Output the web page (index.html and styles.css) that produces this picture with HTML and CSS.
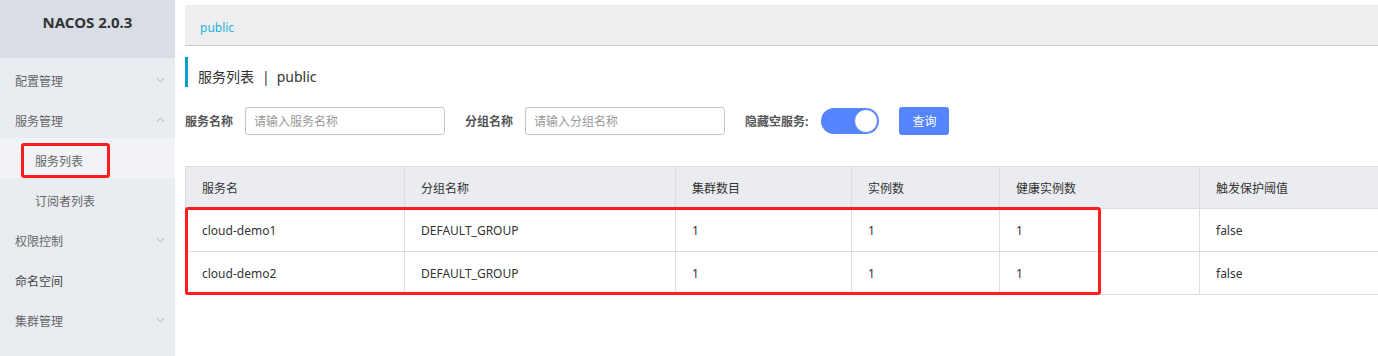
FILE: index.html
```html
<!DOCTYPE html>
<html lang="zh-CN">
<head>
<meta charset="utf-8">
<title>Nacos</title>
<link rel="stylesheet" href="styles.css">
</head>
<body>
<div class="app">
  <aside class="sidebar">
    <div class="brand">NACOS 2.0.3</div>
    <ul class="menu">
      <li class="menu-item">配置管理<svg class="chev" viewBox="0 0 10 6"><path d="M1 1l4 4 4-4"/></svg></li>
      <li class="menu-item">服务管理<svg class="chev" viewBox="0 0 10 6"><path d="M1 5l4-4 4 4"/></svg></li>
      <li class="sub-item active"><span class="sub-label">服务列表</span><span class="mark mark-side"></span></li>
      <li class="sub-item">订阅者列表</li>
      <li class="menu-item">权限控制<svg class="chev" viewBox="0 0 10 6"><path d="M1 1l4 4 4-4"/></svg></li>
      <li class="menu-item strong">命名空间</li>
      <li class="menu-item">集群管理<svg class="chev" viewBox="0 0 10 6"><path d="M1 1l4 4 4-4"/></svg></li>
    </ul>
  </aside>
  <main class="main">
    <div class="crumb"><span class="crumb-link">public</span></div>
    <h1 class="title">服务列表<span class="sep">|</span>public</h1>
    <div class="filters">
      <label class="flabel">服务名称</label>
      <input class="finput" type="text" placeholder="请输入服务名称">
      <label class="flabel">分组名称</label>
      <input class="finput" type="text" placeholder="请输入分组名称">
      <label class="flabel flabel-switch">隐藏空服务:</label>
      <span class="toggle"><span class="knob"></span></span>
      <button class="btn">查询</button>
    </div>
    <div class="table-wrap">
      <table class="table">
        <colgroup>
          <col style="width:219px"><col style="width:271px"><col style="width:176px"><col style="width:148px"><col style="width:200px"><col style="width:179px">
        </colgroup>
        <thead>
          <tr><th>服务名</th><th>分组名称</th><th>集群数目</th><th>实例数</th><th>健康实例数</th><th>触发保护阈值</th></tr>
        </thead>
        <tbody>
          <tr><td>cloud-demo1</td><td>DEFAULT_GROUP</td><td>1</td><td>1</td><td>1</td><td>false</td></tr>
          <tr><td>cloud-demo2</td><td>DEFAULT_GROUP</td><td>1</td><td>1</td><td>1</td><td>false</td></tr>
        </tbody>
      </table>
      <span class="mark mark-table"></span>
    </div>
  </main>
</div>
</body>
</html>
```
FILE: styles.css
```css
* { box-sizing: border-box; }
html, body { margin: 0; padding: 0; }
body {
  font-family: "Noto Sans", "Noto Sans CJK SC", sans-serif;
  font-size: 12px;
  color: #333;
  background: #fff;
}
.app { display: flex; height: 356px; overflow: hidden; }
.sidebar {
  width: 175px;
  flex: none;
  background: #e9ecf1;
}
.brand {
  height: 58px;
  background: #d9dee6;
  display: flex;
  align-items: center;
  justify-content: center;
  font-weight: bold;
  font-size: 15px;
  color: #333;
  padding-bottom: 14px;
}
.menu { list-style: none; margin: 0; padding: 0; }
.menu-item, .sub-item {
  position: relative;
  height: 40px;
  line-height: 48px;
  color: #666;
  padding-left: 15px;
}
.menu-item.strong { color: #444; }
.sub-item { padding-left: 35px; }
.sub-item.active { background: #f1f3f6; }
.chev {
  position: absolute;
  right: 10px;
  top: 19px;
  width: 9px;
  height: 6px;
  fill: none;
  stroke: #a3a6ad;
  stroke-width: 1;
}
.mark {
  position: absolute;
  border: 3px solid #ff1d1d;
  border-radius: 3px;
  pointer-events: none;
}
.mark-side { left: 21px; top: 5px; width: 89px; height: 35px; }

.main { flex: 1; padding: 5px 0 0 10px; min-width: 0; }
.crumb {
  height: 41px;
  background: #eeeeee;
  border-bottom: 1px solid #cccccc;
  padding-left: 15px;
  line-height: 46px;
}
.crumb-link { color: #1fb3de; }
.title {
  margin: 11px 0 0;
  height: 30px;
  border-left: 3px solid #129bd0;
  padding-left: 10px;
  font-size: 14px;
  font-weight: normal;
  line-height: 39px;
  color: #333;
}
.sep { margin: 0 7px 0 8px; }
.filters {
  display: flex;
  align-items: center;
  margin-top: 20px;
  height: 28px;
}
.flabel { font-weight: bold; color: #555; margin-right: 12px; }
.finput {
  width: 200px;
  height: 28px;
  border: 1px solid #c4c6cf;
  border-radius: 3px;
  padding: 0 8px;
  font: inherit;
  margin-right: 20px;
  outline: none;
}
.finput::placeholder { color: #999; }
.flabel-switch { margin-right: 13px; }
.toggle {
  position: relative;
  width: 58px;
  height: 26px;
  border-radius: 13px;
  background: #5584ff;
  margin-right: 20px;
}
.knob {
  position: absolute;
  right: 1px;
  top: 1px;
  width: 24px;
  height: 24px;
  border-radius: 50%;
  background: #fff;
  border: 1px solid #5584ff;
}
.btn {
  width: 50px;
  height: 28px;
  border: none;
  border-radius: 3px;
  background: #5584ff;
  color: #fff;
  font: inherit;
  padding: 0;
}
.table-wrap { position: relative; margin-top: 31px; }
.table {
  width: 100%;
  table-layout: fixed;
  border-collapse: collapse;
  border-top: 1px solid #dcdee3;
}
.table th, .table td {
  text-align: left;
  font-weight: normal;
  padding: 0 16px;
  border: 1px solid #dcdee3;
  border-top: none;
}
.table th:first-child, .table td:first-child { border-left: 1px solid #dcdee3; }
.table th:last-child, .table td:last-child { border-right: none; }
.table th { background: #ebecf0; height: 42px; color: #333; padding-top: 1px; }
.table td { height: 43px; padding-top: 0; }
.mark-table { left: 0; top: 41px; width: 916px; height: 88px; }
```
